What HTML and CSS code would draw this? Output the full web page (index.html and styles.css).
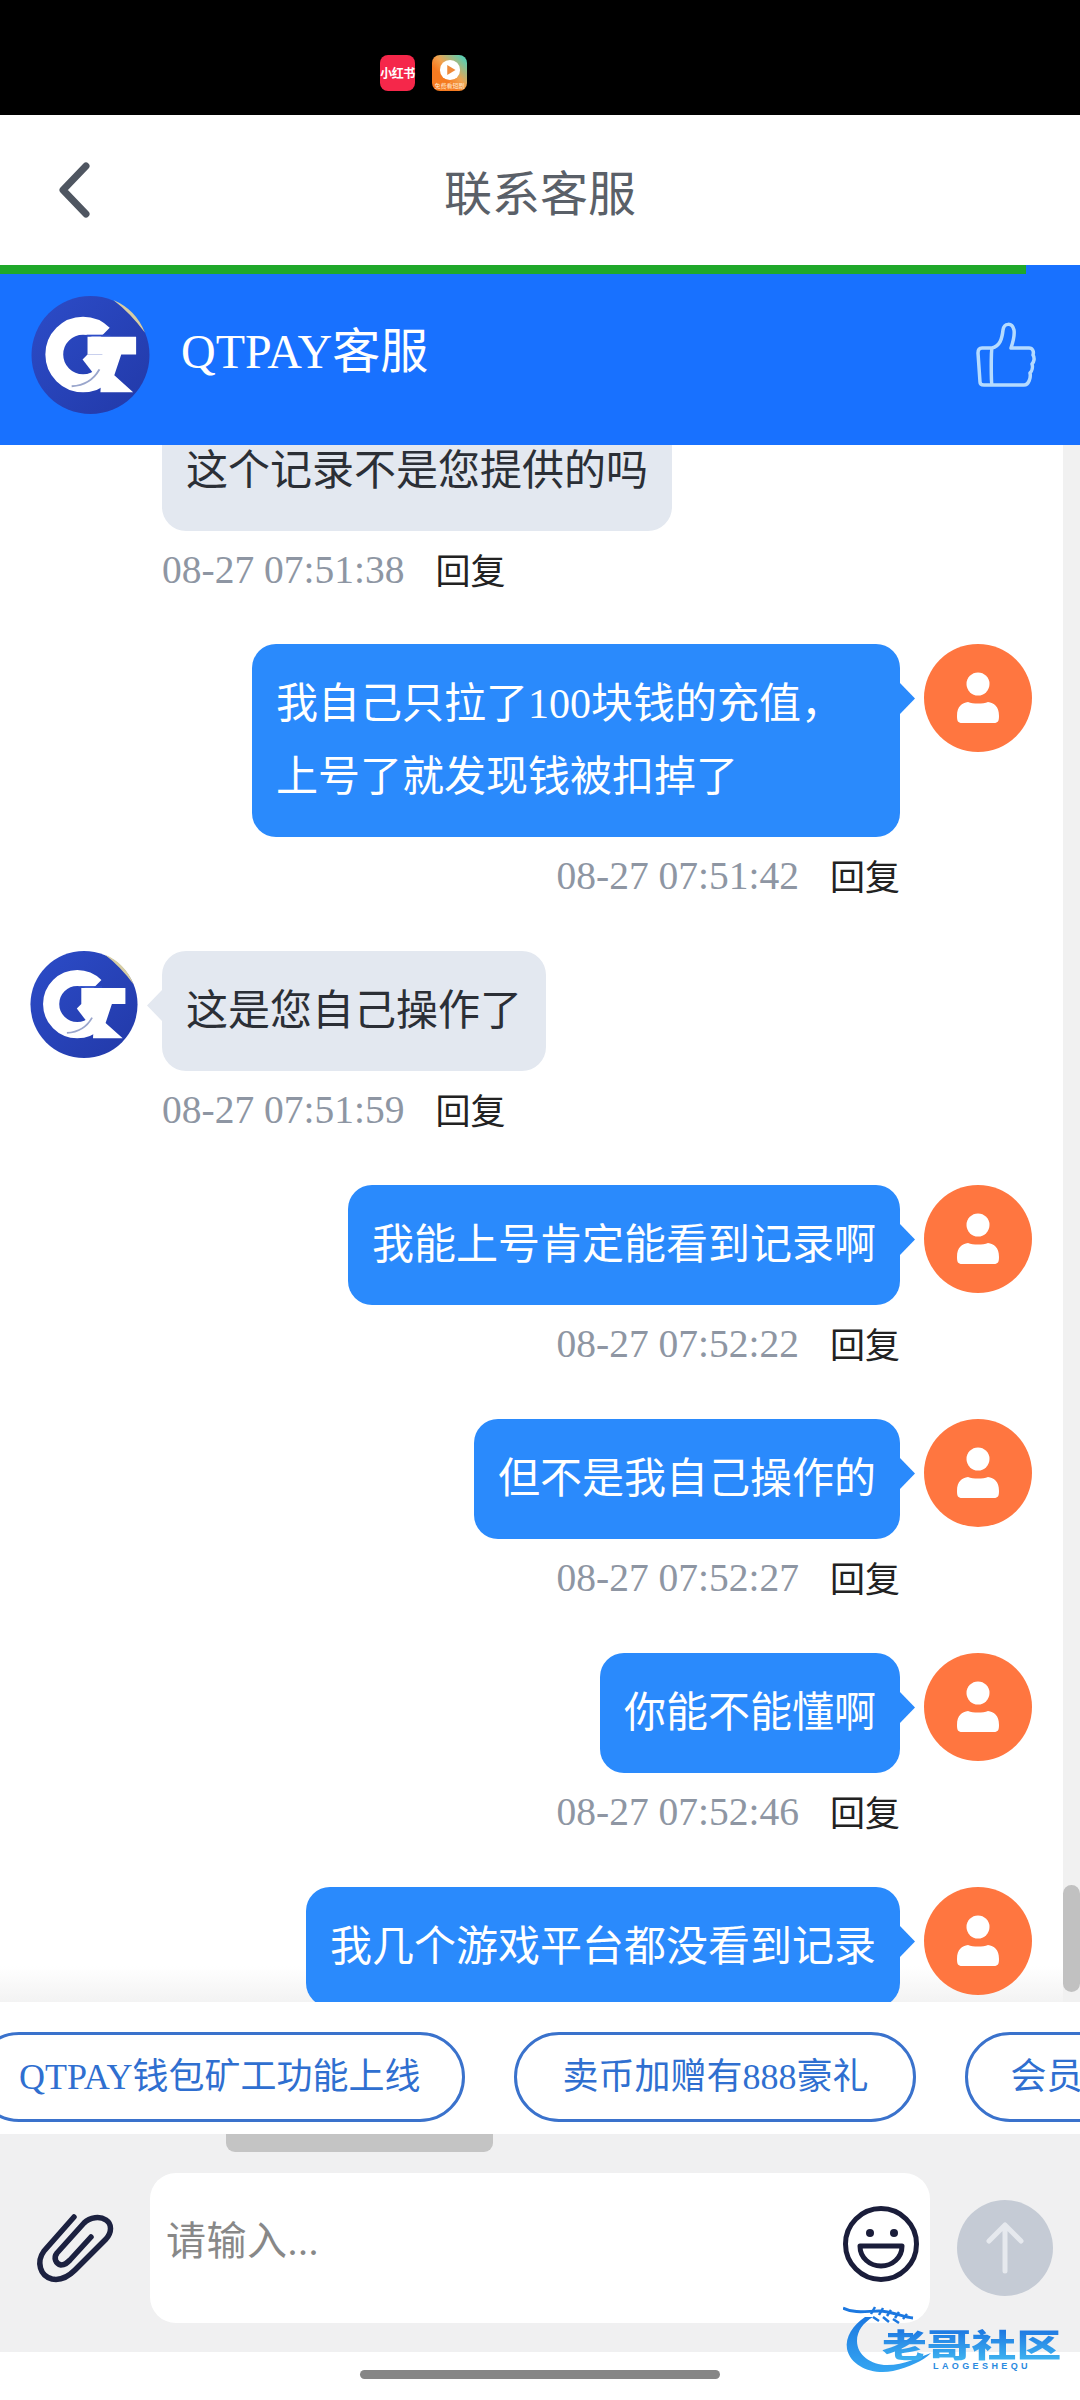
FILE: index.html
```html
<!DOCTYPE html>
<html lang="zh-CN">
<head>
<meta charset="utf-8">
<title>联系客服</title>
<link rel="stylesheet" href="styles.css">
</head>
<body>
<svg class="defs" width="0" height="0" aria-hidden="true">
  <defs>
    <linearGradient id="logoBg" x1="0" y1="0" x2="1" y2="1">
      <stop offset="0" stop-color="#2c4cc8"/>
      <stop offset="1" stop-color="#2239a8"/>
    </linearGradient>
    <symbol id="logo" viewBox="0 0 120 120">
      <circle cx="60" cy="59.500" r="59.500" fill="url(#logoBg)"/>
      <path d="M83 4A59.500 59.500 0 0 1 115 37Q100 17 83 4Z" fill="#d6cda4"/>
      <path d="M73 38.500A29 29 0 1 0 73 79.500" fill="none" stroke="#fff" stroke-width="18"/>
      <path d="M57 59L52 64L62 77L76 80V59Z" fill="#fff"/>
      <path d="M56 40H80" stroke="#2c4cc8" stroke-width="2"/>
      <path d="M57 41H106V59H91L84 80L103 97H70L72 59H57Z" fill="#fff"/>
      <path d="M41 91Q60 90 69 74" fill="none" stroke="#9aa6cc" stroke-width="2"/>
    </symbol>
    <symbol id="person" viewBox="0 0 108 108">
      <circle cx="54" cy="54" r="54" fill="#ff7640"/>
      <circle cx="54" cy="40" r="11.500" fill="#fff"/>
      <path d="M33 72C33 62 38 59 44 58C49 60 59 60 64 58C70 59 75 62 75 72C75 77 74 79 70 79H38C34 79 33 77 33 72Z" fill="#fff"/>
    </symbol>
    <linearGradient id="dragon" x1="0" y1="0" x2="0" y2="1">
      <stop offset="0" stop-color="#1c78e0"/>
      <stop offset="1" stop-color="#35a6f2"/>
    </linearGradient>
  </defs>
</svg>

<div class="app">
  <div class="status">
    <div class="app-icon app-red">小红书</div>
    <div class="app-icon app-video">
      <svg class="play" viewBox="0 0 24 24"><circle cx="12" cy="12" r="11" fill="#fff"/><path d="M9 6.500L18 12L9 17.500Z" fill="#f08a3a"/></svg>
      <span class="app-video-label">免费看短剧</span>
    </div>
  </div>

  <header class="nav">
    <div class="nav-back">
      <svg width="34" height="56" viewBox="0 0 34 56"><path d="M29 4L6 28L29 52" fill="none" stroke="#4f5661" stroke-width="7" stroke-linecap="round" stroke-linejoin="round"/></svg>
    </div>
    <div class="nav-title">联系客服</div>
    <div></div>
  </header>

  <div class="agent">
    <div class="progress"><div class="progress-fill"></div></div>
    <div class="agent-row">
      <svg class="agent-logo"><use href="#logo"/></svg>
      <div class="agent-name">QTPAY客服</div>
      <svg class="thumb" width="60" height="68" viewBox="0 0 60 68"><path d="M16 27C24 25 26 18 27 9C28 2 36 1 38 9C39 15 37 21 35 27L53 27C57 27 58 31 57 34C59 37 58 41 56 43C57 46 56 50 54 52C55 56 53 64 48 64L16 64C15 64 15 27 16 27ZM16 27H6C3 27 2 29 2 32L4 61C4 63 5 64 8 64H16" fill="none" stroke="#b5dbff" stroke-width="3.500" stroke-linejoin="round"/></svg>
    </div>
  </div>

  <div class="chat">
    <div class="list">
      <div class="msg msg-in msg-first">
        <div class="avatar-space"></div>
        <div class="msg-body">
          <div class="bubble bubble-in bubble-notail">这个记录不是您提供的吗</div>
          <div class="meta"><span class="time">08-27 07:51:38</span><span class="reply">回复</span></div>
        </div>
      </div>
      <div class="msg msg-out">
        <svg class="avatar"><use href="#person"/></svg>
        <div class="msg-body">
          <div class="bubble bubble-out">我自己只拉了100块钱的充值，上号了就发现钱被扣掉了</div>
          <div class="meta"><span class="time">08-27 07:51:42</span><span class="reply">回复</span></div>
        </div>
      </div>
      <div class="msg msg-in">
        <svg class="avatar"><use href="#logo"/></svg>
        <div class="msg-body">
          <div class="bubble bubble-in">这是您自己操作了</div>
          <div class="meta"><span class="time">08-27 07:51:59</span><span class="reply">回复</span></div>
        </div>
      </div>
      <div class="msg msg-out">
        <svg class="avatar"><use href="#person"/></svg>
        <div class="msg-body">
          <div class="bubble bubble-out">我能上号肯定能看到记录啊</div>
          <div class="meta"><span class="time">08-27 07:52:22</span><span class="reply">回复</span></div>
        </div>
      </div>
      <div class="msg msg-out">
        <svg class="avatar"><use href="#person"/></svg>
        <div class="msg-body">
          <div class="bubble bubble-out">但不是我自己操作的</div>
          <div class="meta"><span class="time">08-27 07:52:27</span><span class="reply">回复</span></div>
        </div>
      </div>
      <div class="msg msg-out">
        <svg class="avatar"><use href="#person"/></svg>
        <div class="msg-body">
          <div class="bubble bubble-out">你能不能懂啊</div>
          <div class="meta"><span class="time">08-27 07:52:46</span><span class="reply">回复</span></div>
        </div>
      </div>
      <div class="msg msg-out">
        <svg class="avatar"><use href="#person"/></svg>
        <div class="msg-body">
          <div class="bubble bubble-out">我几个游戏平台都没看到记录</div>
        </div>
      </div>
    </div>
    <div class="track"><div class="track-thumb"></div></div>
  </div>

  <div class="chips">
    <div class="chip chip-first">QTPAY钱包矿工功能上线</div>
    <div class="chip chip-wide">卖币加赠有888豪礼</div>
    <div class="chip">会员福利</div>
  </div>

  <div class="composer">
    <div class="hbar"></div>
    <div class="composer-row">
      <div class="clip-cell">
        <svg width="90" height="76" viewBox="30 40 90 76"><path d="M74 47L44 81C36 92 40 106 52 109C62 111 69 106 75 100L106 69C112 62 112 54 106 50C100 46 90 47 84 53L57 83C53 88 56 94 61 95C65 95 67 93 70 90L91 67" fill="none" stroke="#1c2140" stroke-width="5.500" stroke-linecap="round" stroke-linejoin="round"/></svg>
      </div>
      <div class="input">
        <span class="placeholder">请输入...</span>
        <svg class="smile" width="76" height="76" viewBox="0 0 76 76">
          <circle cx="38" cy="38" r="35.500" fill="none" stroke="#1a1d3a" stroke-width="5"/>
          <circle cx="27" cy="27" r="4" fill="#1a1d3a"/>
          <circle cx="51" cy="27" r="4" fill="#1a1d3a"/>
          <path d="M17 40H59C59 52 49 60 38 60C27 60 17 52 17 40Z" fill="none" stroke="#1a1d3a" stroke-width="5" stroke-linejoin="round"/>
        </svg>
      </div>
      <div class="send">
        <svg width="40" height="54" viewBox="0 0 40 54"><path d="M20 50V4M4 20L20 4L36 20" fill="none" stroke="#e6e9ee" stroke-width="5" stroke-linecap="round" stroke-linejoin="round"/></svg>
      </div>
    </div>
  </div>

  <div class="home"><div class="home-bar"></div></div>

  <div class="watermark">
    <svg class="wm-dragon" width="100" height="72" viewBox="0 0 100 72">
      <path d="M22 12C10 20 2 32 4 44C8 62 30 70 50 66C66 62 80 56 88 48C76 52 62 60 44 60C28 60 14 50 14 36C14 26 20 18 30 12Z" fill="url(#dragon)"/>
      <path d="M0 3C12 9 24 6 36 6C48 6 60 12 70 13" fill="none" stroke="#1c78e0" stroke-width="3"/>
      <path d="M28 9L32 2M36 10L40 3M44 11L48 5M52 13L56 7M60 14L64 9M30 12L36 16M40 12L46 17M50 14L56 18" fill="none" stroke="#1c78e0" stroke-width="2.500"/>
    </svg>
    <div class="wm-text">
      <div class="wm-cn">老哥社区</div>
      <div class="wm-en">LAOGESHEQU</div>
    </div>
  </div>
</div>
</body>
</html>
```

FILE: styles.css
```css
* { box-sizing: border-box; }
html, body { margin: 0; padding: 0; background: #fff; }
body { width: 1080px; height: 2400px; overflow: hidden; }
.defs { position: absolute; }

.app {
  position: relative;
  width: 1080px;
  height: 2400px;
  display: flex;
  flex-direction: column;
  overflow: hidden;
  font-family: "Liberation Serif", "Noto Sans CJK SC", sans-serif;
}

/* status bar */
.status {
  flex: 0 0 115px;
  background: #000;
  display: flex;
  align-items: flex-start;
  gap: 17px;
  padding: 55px 0 0 380px;
}
.app-icon { width: 35px; height: 36px; border-radius: 8px; }
.app-red {
  background: #f5274a;
  color: #fff;
  font: 700 12px/36px "Noto Sans CJK SC", sans-serif;
  text-align: center;
  letter-spacing: -0.5px;
  white-space: nowrap;
}
.app-video {
  background: linear-gradient(45deg, #f57a20 35%, #f2a24e 55%, #5fcdb0 90%);
  display: flex;
  flex-direction: column;
  align-items: center;
  padding-top: 4px;
  overflow: hidden;
}
.play { width: 22px; height: 22px; }
.app-video-label {
  font: 6px/9px "Noto Sans CJK SC", sans-serif;
  color: #ffe9cf;
  white-space: nowrap;
}

/* nav */
.nav {
  flex: 0 0 150px;
  background: #fff;
  display: grid;
  grid-template-columns: 1fr auto 1fr;
  align-items: center;
}
.nav-back { padding-left: 57px; display: flex; }
.nav-title {
  font: 48px/60px "Noto Sans CJK SC", sans-serif;
  color: #5a6068;
}

/* agent header */
.agent { flex: 0 0 180px; background: #1871ff; display: flex; flex-direction: column; }
.progress { height: 9px; }
.progress-fill { width: 1026px; height: 9px; background: #1fa82a; }
.agent-row {
  flex: 1;
  display: flex;
  align-items: center;
  padding: 0 44px 9px 31px;
}
.agent-logo { width: 119px; height: 119px; }
.agent-name {
  flex: 1;
  margin-left: 31px;
  padding-bottom: 6px;
  color: #fff;
  font-size: 48px;
  line-height: 60px;
}
.thumb { margin-top: 0; }

/* chat */
.chat {
  flex: 0 0 1557px;
  display: flex;
  overflow: hidden;
  background: linear-gradient(to bottom, #fff calc(100% - 36px), #f3f3f3 100%);
}
.list {
  flex: 1;
  min-width: 0;
  overflow: hidden;
  padding: 0 31px 0 30px;
}
.track { flex: 0 0 17px; background: #f1f1f1; }
.track-thumb {
  margin-top: 1440px;
  height: 107px;
  background: #c1c1c1;
  border-radius: 9px;
}

.msg { display: flex; gap: 24px; margin-bottom: 55px; align-items: flex-start; }
.msg-first { margin-top: -34px; margin-bottom: 54px; }
.msg-out { flex-direction: row-reverse; }
.avatar { flex: 0 0 108px; width: 108px; height: 108px; }
.avatar-space { flex: 0 0 108px; }
.msg-body { display: flex; flex-direction: column; align-items: flex-start; }
.msg-out .msg-body { align-items: flex-end; }

.bubble {
  position: relative;
  max-width: 648px;
  padding: 23.500px 24px;
  border-radius: 24px;
  font-size: 42px;
  line-height: 73px;
}
.bubble-in { background: #e3e8f0; color: #2b2f36; }
.bubble-out { background: #2a8afc; color: #fff; }
.bubble-in::before,
.bubble-out::before {
  content: "";
  position: absolute;
  top: 39px;
  width: 15px;
  height: 31px;
}
.bubble-in::before {
  left: -15px;
  background: #e3e8f0;
  clip-path: polygon(100% 0, 0 50%, 100% 100%);
}
.bubble-out::before {
  right: -15px;
  background: #2a8afc;
  clip-path: polygon(0 0, 100% 50%, 0 100%);
}
.bubble-notail::before { display: none; }

.meta {
  margin-top: 19px;
  display: flex;
  gap: 31px;
  align-items: center;
  height: 40px;
  white-space: nowrap;
}
.time { font-size: 39.500px; line-height: 40px; color: #8e96a3; }
.reply { font: 35px/40px "Noto Sans CJK SC", sans-serif; color: #222; padding-bottom: 3px; }

/* chips */
.chips {
  flex: 0 0 132px;
  background: #fff;
  display: flex;
  gap: 49px;
  padding-top: 30px;
  overflow: hidden;
  white-space: nowrap;
}
.chip {
  flex: none;
  height: 90px;
  padding: 0 42px;
  border: 3px solid #3a72cc;
  border-radius: 45px;
  color: #2f6fd0;
  font-size: 36px;
  line-height: 84px;
}
.chip-first { margin-left: -26px; }
.chip-wide { padding: 0 45px; }

/* composer */
.composer { flex: 0 0 218px; background: #f0f0f1; }
.hbar {
  width: 267px;
  height: 18px;
  margin-left: 226px;
  background: #c4c4c4;
  border-radius: 0 0 9px 9px;
}
.composer-row {
  display: flex;
  align-items: center;
  padding-top: 21px;
}
.clip-cell { flex: 0 0 150px; display: flex; justify-content: center; }
.input {
  flex: 0 0 780px;
  height: 150px;
  background: #fff;
  border-radius: 26px;
  display: flex;
  align-items: center;
  justify-content: space-between;
  padding: 0 11px 8px 16px;
}
.placeholder {
  margin-bottom: 5px;
  font-size: 40px;
  line-height: 50px;
  color: #888;
  letter-spacing: 0.500px;
}
.send {
  flex: 0 0 96px;
  height: 96px;
  margin-left: 27px;
  border-radius: 50%;
  background: #c5cbd5;
  display: flex;
  align-items: center;
  justify-content: center;
}

/* home indicator */
.home { flex: 1; background: #fff; padding-top: 18px; display: flex; justify-content: center; }
.home-bar { width: 360px; height: 9px; border-radius: 5px; background: #868686; }

/* watermark overlay */
.watermark {
  position: absolute;
  left: 843px;
  top: 2305px;
  width: 225px;
  height: 72px;
}
.wm-dragon { position: absolute; left: 0; top: 0; }
.wm-text { position: absolute; left: 39px; top: 20px; }
.wm-cn {
  width: 128px;
  font: 900 32px/36px "Noto Sans CJK SC", sans-serif;
  white-space: nowrap;
  transform: scaleX(1.4);
  transform-origin: left center;
  background: linear-gradient(to bottom, #1a6fe0, #3fb4f0);
  -webkit-background-clip: text;
  background-clip: text;
  color: transparent;
}
.wm-en {
  margin: 0 0 0 51px;
  font: 700 9px/11px "Liberation Sans", sans-serif;
  letter-spacing: 3.400px;
  color: #2a8ae0;
  white-space: nowrap;
}
```
